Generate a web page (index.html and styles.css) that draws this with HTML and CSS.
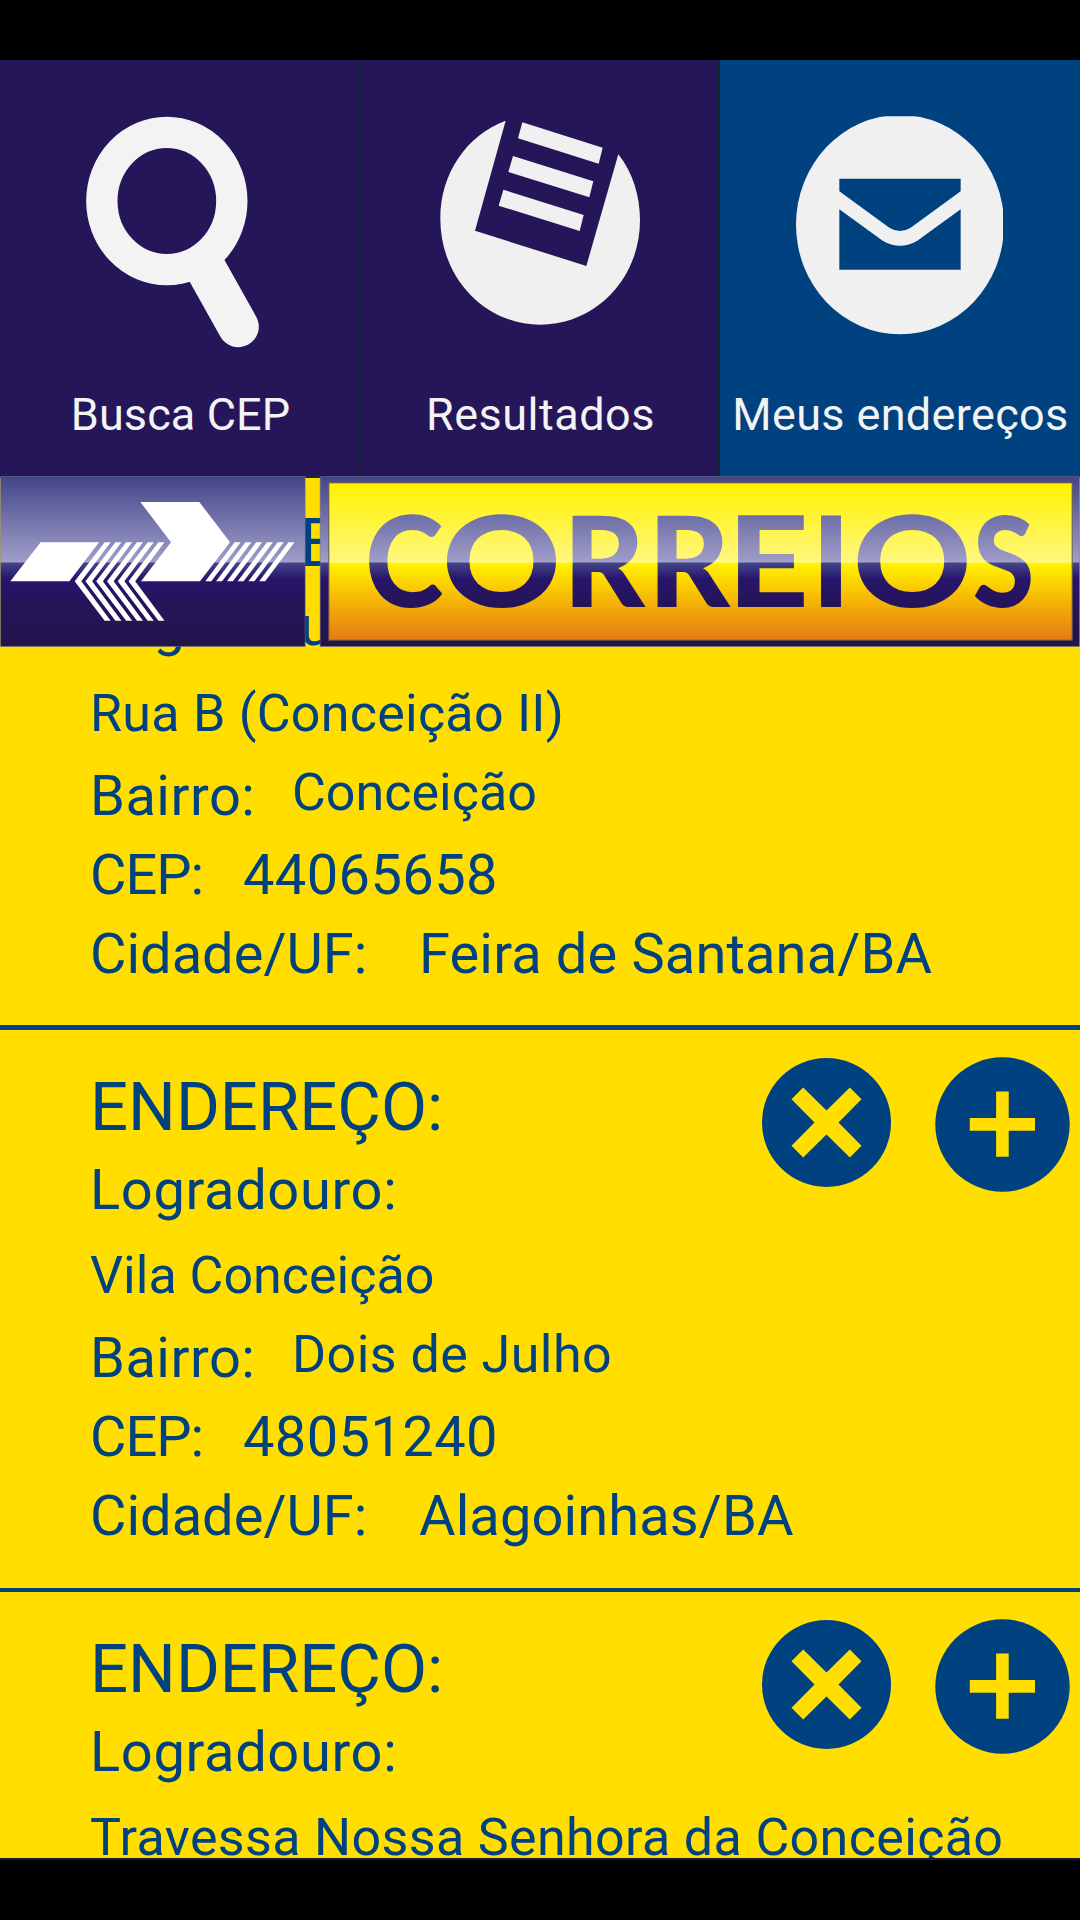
FILE: index.html
```html
<!DOCTYPE html>
<html lang="pt-BR">
<head>
<meta charset="utf-8">
<title>Meus endereços</title>
<link rel="stylesheet" href="styles.css">
</head>
<body>
<svg class="defs" width="0" height="0" aria-hidden="true">
  <defs>
    <symbol id="icon-remove" viewBox="-64.5 -64.5 129 129">
      <circle r="64.5" fill="#004280"/>
      <path fill="#ffde00" d="M-35-23.3-23.3-35 0-12 23.3-35 35-23.3 12 0 35 23.3 23.3 35 0 12-23.3 35-35 23.3-12 0Z"/>
    </symbol>
    <symbol id="icon-add" viewBox="-67.5 -67.5 135 135">
      <circle r="67.2" fill="#004280"/>
      <path fill="#ffde00" d="M-32.7-6.5H-6.4V-33H6.2V-6.5H32.5V6.2H6.2V32.3H-6.4V6.2H-32.7Z"/>
    </symbol>
  </defs>
</svg>

<div class="app">
  <nav class="tabs">
    <a class="tab">
      <svg class="tab-icon" viewBox="0 60 1080 900">
        <path d="M590 637 715 860" stroke="#f3f3f3" stroke-width="123" stroke-linecap="round"/>
        <ellipse cx="500.500" cy="483" rx="195" ry="206" fill="#25165a" stroke="#f3f3f3" stroke-width="94"/>
      </svg>
      <span class="tab-label l1">Busca CEP</span>
    </a>
    <a class="tab">
      <svg class="tab-icon" viewBox="30 60 1080 900">
        <path fill="#f0f0f0" d="M467 242 375 572 709 678 805 343C850 400 870 470 870 541C870 716 736 854 571 854C405 854 271 714 271 536C271 400 350 285 467 242Z"/>
        <path fill="#f0f0f0" d="M517 247 758 323 746 371 504 295ZM489 348 730 424 718 472 475 396ZM460 449 701 525 689 573 446 497Z"/>
      </svg>
      <span class="tab-label l2">Resultados</span>
    </a>
    <a class="tab active">
      <svg class="tab-icon" viewBox="30 60 1080 900">
        <clipPath id="envelope-clip"><path d="M250 229H879V890H250Z"/></clipPath>
        <ellipse cx="570" cy="554" rx="312" ry="329" fill="#f0f0f0" clip-path="url(#envelope-clip)"/>
        <path fill="#004280" d="M388 416H752V454L602 563Q570 583 538 563L388 454ZM388 508 518 602Q570 632 622 602L752 508V689H388Z"/>
      </svg>
      <span class="tab-label l3">Meus endereços</span>
    </a>
  </nav>

  <svg class="banner" viewBox="0 33 3240 513">
    <defs>
      <linearGradient id="blue" gradientUnits="userSpaceOnUse" x1="0" y1="33" x2="0" y2="546">
        <stop offset="0" stop-color="#434489"/>
        <stop offset=".25" stop-color="#7172aa"/>
        <stop offset=".49" stop-color="#9c9bc6"/>
        <stop offset=".502" stop-color="#a5a3cc"/>
        <stop offset=".51" stop-color="#444589"/>
        <stop offset=".6" stop-color="#27156b"/>
        <stop offset=".75" stop-color="#251459"/>
        <stop offset="1" stop-color="#221548"/>
      </linearGradient>
      <linearGradient id="gold" gradientUnits="userSpaceOnUse" x1="0" y1="52" x2="0" y2="527">
        <stop offset="0" stop-color="#fff200"/>
        <stop offset=".25" stop-color="#fff43c"/>
        <stop offset=".49" stop-color="#fff77c"/>
        <stop offset=".5" stop-color="#fffa90"/>
        <stop offset=".515" stop-color="#fff200"/>
        <stop offset=".6" stop-color="#fddc00"/>
        <stop offset=".8" stop-color="#f2a808"/>
        <stop offset="1" stop-color="#e67b14"/>
      </linearGradient>
      <path id="chevron" d="M314 232H332L244 349 332 467H314L224 349Z"/>
      <path id="stripe" d="M704 232H722L634 349H616Z"/>
    </defs>
    <rect x="1.500" y="34.500" width="914" height="510" fill="url(#blue)" stroke="#6f6fa2" stroke-opacity=".5" stroke-width="3"/>
    <g fill="#fff">
      <path d="M122 232H297L208 349H31Z"/>
      <path d="M421 111H598L690 232 600 349H423L513 232Z"/>
      <use href="#chevron"/><use href="#chevron" x="32.300"/><use href="#chevron" x="64.600"/>
      <use href="#chevron" x="96.900"/><use href="#chevron" x="129.200"/><use href="#chevron" x="161.500"/>
      <use href="#stripe"/><use href="#stripe" x="32.300"/><use href="#stripe" x="64.600"/>
      <use href="#stripe" x="96.900"/><use href="#stripe" x="129.200"/><use href="#stripe" x="161.500"/>
    </g>
    <rect x="960.500" y="34.500" width="2278" height="510" fill="url(#blue)" stroke="#6f6fa2" stroke-opacity=".5" stroke-width="3"/>
    <rect x="986.500" y="53.500" width="2230" height="472" fill="url(#gold)" stroke="#6b5a50" stroke-width="3"/>
    <text class="brand" y="426" fill="url(#blue)"><tspan x="1095" textLength="235" lengthAdjust="spacingAndGlyphs">C</tspan><tspan x="1326" textLength="357" lengthAdjust="spacingAndGlyphs">O</tspan><tspan x="1689" textLength="246" lengthAdjust="spacingAndGlyphs">R</tspan><tspan x="1944" textLength="246" lengthAdjust="spacingAndGlyphs">R</tspan><tspan x="2182" textLength="245" lengthAdjust="spacingAndGlyphs">E</tspan><tspan x="2433" textLength="120" lengthAdjust="spacingAndGlyphs">I</tspan><tspan x="2558" textLength="357" lengthAdjust="spacingAndGlyphs">O</tspan><tspan x="2918" textLength="185" lengthAdjust="spacingAndGlyphs">S</tspan></text>
  </svg>

  <main class="list">
    <article class="item first">
      <header class="item-head">
        <div><h2 class="title">ENDEREÇO:</h2><div class="label street-label">Logradouro:</div></div>
      </header>
      <div class="street s1">Rua B (Conceição II)</div>
      <div class="row district"><span class="label">Bairro:</span><span class="small v1">Conceição</span></div>
      <div class="row cep"><span class="label">CEP:</span><span>44065658</span></div>
      <div class="row city"><span class="label">Cidade/UF:</span><span class="c1">Feira de Santana/BA</span></div>
    </article>
    <article class="item">
      <header class="item-head">
        <div><h2 class="title">ENDEREÇO:</h2><div class="label street-label">Logradouro:</div></div>
        <div class="actions">
          <svg class="remove"><use href="#icon-remove"/></svg>
          <svg class="add"><use href="#icon-add"/></svg>
        </div>
      </header>
      <div class="street s2">Vila Conceição</div>
      <div class="row district"><span class="label">Bairro:</span><span class="small v2">Dois de Julho</span></div>
      <div class="row cep"><span class="label">CEP:</span><span>48051240</span></div>
      <div class="row city"><span class="label">Cidade/UF:</span><span class="c2">Alagoinhas/BA</span></div>
    </article>
    <article class="item">
      <header class="item-head">
        <div><h2 class="title">ENDEREÇO:</h2><div class="label street-label">Logradouro:</div></div>
        <div class="actions">
          <svg class="remove"><use href="#icon-remove"/></svg>
          <svg class="add"><use href="#icon-add"/></svg>
        </div>
      </header>
      <div class="street s3">Travessa Nossa Senhora da Conceição</div>
    </article>
  </main>
</div>
</body>
</html>
```
FILE: styles.css
```css
* { box-sizing: border-box; }
body {
  margin: 0;
  background: #000;
  font-family: Roboto, sans-serif;
  color: #004280;
}
svg { display: block; }
.defs { position: absolute; }
.app {
  position: relative;
  display: flex;
  flex-direction: column;
  height: 1920px;
  padding: 60px 0;
  overflow: hidden;
}

/* Tabs */
.tabs {
  flex: none;
  display: grid;
  grid-template-columns: repeat(3, 360px);
  height: 418px;
  border-bottom: 2px solid #14282f;
}
.tab {
  display: flex;
  flex-direction: column;
  align-items: center;
  background: #25165a;
  box-shadow: inset -2px 0 #14282f;
  color: #f3f3f3;
}
.tab.active { background: #004280; box-shadow: none; }
.tab-icon { flex: none; width: 360px; height: 300px; }
.tab-label {
  font-size: 45px;
  line-height: 110px;
  white-space: nowrap;
}
.l1 { letter-spacing: .1px; margin-left: 1px; }
.l2 { letter-spacing: .5px; margin-left: 1px; }
.l3 { letter-spacing: .35px; margin-left: 1px; }

/* Brand banner floats over the scrolled list */
.banner {
  position: absolute;
  top: 476px;
  left: 0;
  z-index: 1;
  width: 1080px;
  height: 171px;
}
.brand {
  font-family: Lato, sans-serif;
  font-weight: 900;
  font-size: 376px;
}

/* Address list */
.list {
  flex: 1;
  min-height: 0;
  overflow: hidden;
  background: #ffde00;
  border-bottom: 2px solid #14202c;
}
.item {
  padding: 36px 0 31px 90px;
  border-bottom: 4px solid #004280;
  font-size: 56px;
  white-space: nowrap;
}
.item.first {
  margin-top: -12px;
  padding-bottom: 30px;
  border-bottom-width: 5px;
}
.item-head {
  display: flex;
  justify-content: space-between;
  height: 168px;
}
.first .item-head { height: 170px; }
.title {
  margin: 0;
  font-size: 67px;
  font-weight: 400;
  line-height: 82px;
}
.street-label { line-height: 84px; letter-spacing: .65px; }
.actions {
  display: flex;
  align-items: flex-start;
  gap: 44px;
  margin: -9px 10px 0 0;
}
.remove { width: 129px; height: 129px; margin-top: 1px; }
.add { width: 135px; height: 135px; }
.street { font-size: 52px; line-height: 84px; }
.s1 { letter-spacing: .25px; }
.s3 { letter-spacing: .35px; }
.row { display: flex; }
.row .label { flex: none; }
.district { line-height: 81px; }
.district .label { width: 202px; letter-spacing: .5px; }
.district .small { font-size: 52px; line-height: 74px; }
.v2 { letter-spacing: .45px; }
.cep { line-height: 76px; letter-spacing: .4px; }
.cep .label { width: 153px; letter-spacing: -1px; }
.city { line-height: 82px; }
.city .label { width: 329px; }
.c1 { letter-spacing: .15px; }
.c2 { letter-spacing: .1px; }
```
